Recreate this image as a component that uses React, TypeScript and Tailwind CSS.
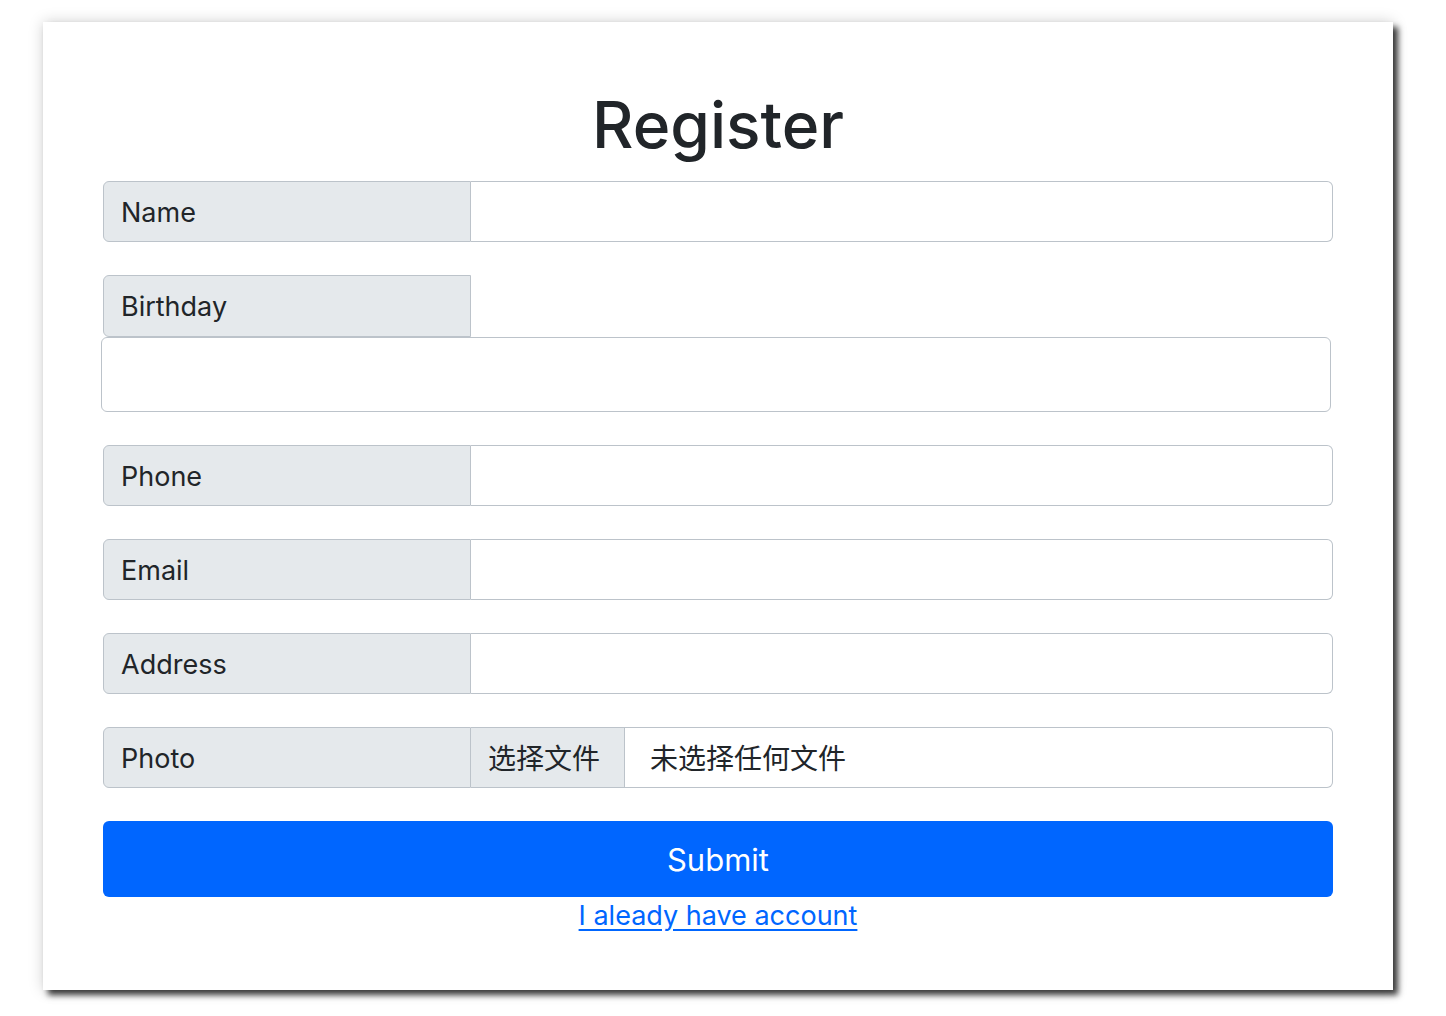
import React from 'react';

const font = { fontFamily: 'Inter, "Noto Sans CJK SC", sans-serif' };

function Row({ label }: { label: string }) {
  return (
    <div className="flex h-[61px] mb-[33px]">
      <div className="w-[368px] shrink-0 flex items-center pl-[17px] pt-[3px] bg-[#e5e9ec] border border-[#bcc3ca] rounded-l-[6px] text-[27px] text-[#212529]">
        {label}
      </div>
      <input className="flex-1 min-w-0 border border-l-0 border-[#bcc3ca] rounded-r-[6px] bg-white outline-none" />
    </div>
  );
}

export default function App() {
  return (
    <div className="w-[1446px] h-[1016px] bg-white pl-[43px] pt-[22px]" style={font}>
      <div className="w-[1350px] h-[968px] bg-white px-[60px] pt-[64px] shadow-[0_0_14px_rgba(0,0,0,0.18),5px_5px_6px_rgba(0,0,0,0.75)]">
        <h1 className="text-center text-[64px] leading-[77px] font-medium text-[#212529] mb-[18px]">Register</h1>

        <Row label="Name" />

        <div className="mb-[33px]">
          <div className="w-[368px] h-[62px] flex items-center pl-[17px] pt-[3px] bg-[#e5e9ec] border border-[#bcc3ca] rounded-l-[6px] text-[27px] text-[#212529]">
            Birthday
          </div>
          <input className="block w-[1230px] h-[75px] ml-[-2px] border border-[#bcc3ca] rounded-[6px] bg-white outline-none" />
        </div>

        <Row label="Phone" />
        <Row label="Email" />
        <Row label="Address" />

        <div className="flex h-[61px] mb-[33px] text-[27px] text-[#212529]">
          <div className="w-[368px] shrink-0 flex items-center pl-[17px] pt-[3px] bg-[#e5e9ec] border border-[#bcc3ca] rounded-l-[6px]">
            Photo
          </div>
          <div className="flex flex-1 border border-l-0 border-[#bcc3ca] rounded-r-[6px] overflow-hidden text-[28px]">
            <div className="w-[154px] shrink-0 flex items-center pl-[17px] pt-[2px] bg-[#e5e9ec] border-r border-[#bcc3ca]">选择文件</div>
            <div className="flex items-center pl-[25px] pt-[2px] bg-white">未选择任何文件</div>
          </div>
        </div>

        <button className="w-[1230px] h-[76px] pt-[3px] rounded-[6px] bg-[#0066ff] text-white text-[31px]">Submit</button>
        <div className="text-center text-[27px] leading-[38px]">
          <a href="#" className="text-[#0066ff] underline underline-offset-[4px]">I aleady have account</a>
        </div>
      </div>
    </div>
  );
}
